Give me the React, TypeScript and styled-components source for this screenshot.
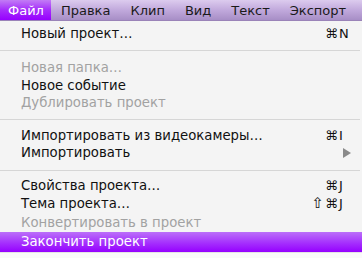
import React from "react";
import styled, {createGlobalStyle} from "styled-components";

const Global = createGlobalStyle`
  html, body {
    margin: 0;
    padding: 0;
    background: #f7f7f7;
    overflow: hidden;
  }
  * { box-sizing: border-box; }
`;

const Screen = styled.div`
  width: 362px;
  height: 258px;
  overflow: hidden;
  font-family: "DejaVu Sans", "Liberation Sans", sans-serif;
  background: #f4f4f4;
`;

const MenuBar = styled.div`
  height: 21px;
  display: flex;
  align-items: center;
  white-space: nowrap;
  overflow: hidden;
  background: linear-gradient(#dccbee, #c1a9dc 50%, #a78ec6);
  border-bottom: 1px solid #9a83b8;
`;

const BarItem = styled.div<{active?: boolean}>`
  height: 100%;
  display: flex;
  align-items: center;
  padding: ${p => (p.active ? "0 7px 0 8px" : "0 10px")};
  font-size: 13px;
  color: ${p => (p.active ? "#fff" : "#1a1a1a")};
  background: ${p => (p.active ? "linear-gradient(#c27cf5, #a52dfb 50%, #9600ff)" : "transparent")};
`;

const Body = styled.div`
  display: flex;
  flex-direction: column;
  height: 237px;
`;

const Menu = styled.div`
  display: flex;
  flex-direction: column;
  padding-top: 3px;
`;

const Row = styled.div<{h?: number; disabled?: boolean; selected?: boolean}>`
  height: ${p => p.h ?? 18}px;
  display: flex;
  align-items: center;
  padding-left: 21px;
  font-size: 13.25px;
  color: ${p => (p.selected ? "#fff" : p.disabled ? "#a2a2a2" : "#111")};
  background: ${p => (p.selected ? "linear-gradient(#bb6ff9, #a735fd 50%, #9500ff)" : "transparent")};
`;

const Label = styled.span`
  flex: 1;
  white-space: nowrap;
`;

const Shortcut = styled.span`
  display: flex;
  align-items: center;
  width: 40px;
  margin-right: 10px;
  font-size: 13px;
`;

const Mods = styled.span`
  width: 26px;
  display: flex;
  justify-content: flex-end;
  align-items: center;
`;

const Shift = styled.span`
  font-size: 15px;
  margin-right: 1px;
  line-height: 1;
`;

const Key = styled.span`
  width: 14px;
  padding-left: 1px;
`;

const Arrow = styled.span`
  width: 40px;
  margin-right: 10px;
  display: flex;
  justify-content: flex-end;
  padding-right: 1px;
  svg { display: block; }
`;

const Separator = styled.div<{h: number; at: number}>`
  height: ${p => p.h}px;
  position: relative;
  &::after {
    content: "";
    position: absolute;
    left: 0;
    right: 2px;
    top: ${p => p.at}px;
    border-top: 1px solid #d6d6d6;
  }
`;

const Bottom = styled.div`
  flex: 1;
  border-top: 1px solid #e4e4e4;
  background: #fafafa;
`;

type Item = {label: string; shift?: boolean; k?: string; disabled?: boolean; sub?: boolean; selected?: boolean; h?: number};

const groups: {sep?: [number, number]; items: Item[]}[] = [
  {items: [{label: "Новый проект…", k: "N"}]},
  {
    sep: [17, 8],
    items: [
      {label: "Новая папка…", disabled: true, h: 17.5},
      {label: "Новое событие", h: 17.5},
      {label: "Дублировать проект", disabled: true, h: 17.5},
    ],
  },
  {
    sep: [15, 7],
    items: [
      {label: "Импортировать из видеокамеры…", k: "I", h: 17.5},
      {label: "Импортировать", sub: true, h: 17.5},
    ],
  },
  {
    sep: [14.5, 8],
    items: [
      {label: "Свойства проекта…", k: "J", h: 18.5},
      {label: "Тема проекта…", shift: true, k: "J", h: 18.5},
      {label: "Конвертировать в проект", disabled: true, h: 18.5},
      {label: "Закончить проект", selected: true, h: 20},
    ],
  },
];

const bar = ["Файл", "Правка", "Клип", "Вид", "Текст", "Экспорт", "Справка"];

export default function App() {
  return (
    <Screen>
      <Global />
      <MenuBar>
        {bar.map((b, i) => (
          <BarItem key={b} active={i === 0}>{b}</BarItem>
        ))}
      </MenuBar>
      <Body>
        <Menu>
          {groups.map((g, gi) => (
            <React.Fragment key={gi}>
              {g.sep && <Separator h={g.sep[0]} at={g.sep[1]} />}
              {g.items.map(it => (
                <Row key={it.label} h={it.h} disabled={it.disabled} selected={it.selected}>
                  <Label>{it.label}</Label>
                  {it.k && (
                    <Shortcut>
                      <Mods>
                        {it.shift && <Shift>⇧</Shift>}
                        ⌘
                      </Mods>
                      <Key>{it.k}</Key>
                    </Shortcut>
                  )}
                  {it.sub && (
                    <Arrow>
                      <svg width="8" height="10" viewBox="0 0 8 10">
                        <path d="M0 0 L8 5 L0 10 Z" fill="#8a8a8a" />
                      </svg>
                    </Arrow>
                  )}
                </Row>
              ))}
            </React.Fragment>
          ))}
        </Menu>
        <Bottom />
      </Body>
    </Screen>
  );
}
